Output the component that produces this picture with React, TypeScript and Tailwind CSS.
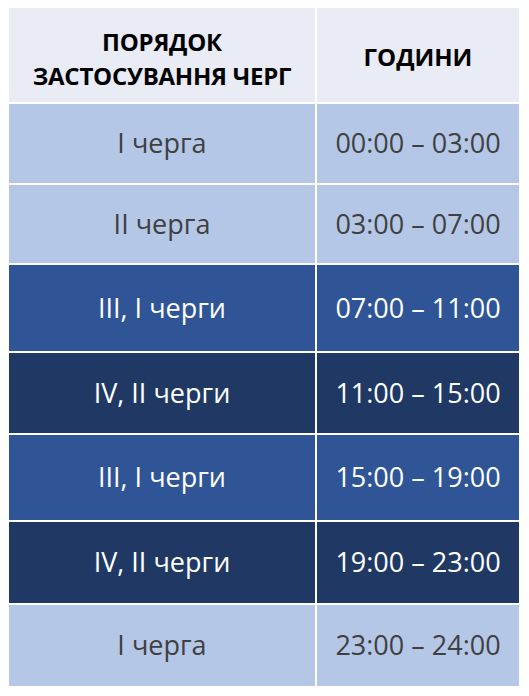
// Графік застосування черг відключень
const ROWS = [
  { label: "I черга", time: "00:00 – 03:00", tone: "light", h: "h-[79px]" },
  { label: "II черга", time: "03:00 – 07:00", tone: "light", h: "h-[78px]" },
  { label: "III, I черги", time: "07:00 – 11:00", tone: "mid", h: "h-[86px]" },
  { label: "IV, II черги", time: "11:00 – 15:00", tone: "dark", h: "h-[80px]" },
  { label: "III, I черги", time: "15:00 – 19:00", tone: "mid", h: "h-[85px]" },
  { label: "IV, II черги", time: "19:00 – 23:00", tone: "dark", h: "h-[81px]" },
  { label: "I черга", time: "23:00 – 24:00", tone: "light", h: "h-[81px]" },
];

const TONE: Record<string, string> = {
  light: "bg-[#b4c7e7] text-[#404040]",
  mid: "bg-[#2f5597] text-white",
  dark: "bg-[#203864] text-white",
};

export default function App() {
  return (
    <div className="min-h-screen bg-white pl-[9px] pt-[8px] font-['Open_Sans',sans-serif]">
      <div className="grid w-[510px] grid-cols-[306px_202px] gap-[2px]">
        {/* Header */}
        <div className="flex h-[94px] flex-col items-center justify-center bg-[#e9ebf5] pt-2 text-[24px] font-bold leading-[34px] tracking-[-0.01em] text-black">
          <span>ПОРЯДОК</span>
          <span>ЗАСТОСУВАННЯ ЧЕРГ</span>
        </div>
        <div className="flex h-[94px] items-center justify-center bg-[#e9ebf5] pt-1 text-[24px] font-bold text-black">
          ГОДИНИ
        </div>

        {ROWS.map((r, i) => (
          <div key={i} className="contents">
            <div className={`flex ${r.h} items-center justify-center text-[27px] ${TONE[r.tone]}`}>
              {r.label}
            </div>
            <div className={`flex ${r.h} items-center justify-center text-[27px] ${TONE[r.tone]}`}>
              {r.time}
            </div>
          </div>
        ))}
      </div>
    </div>
  );
}
